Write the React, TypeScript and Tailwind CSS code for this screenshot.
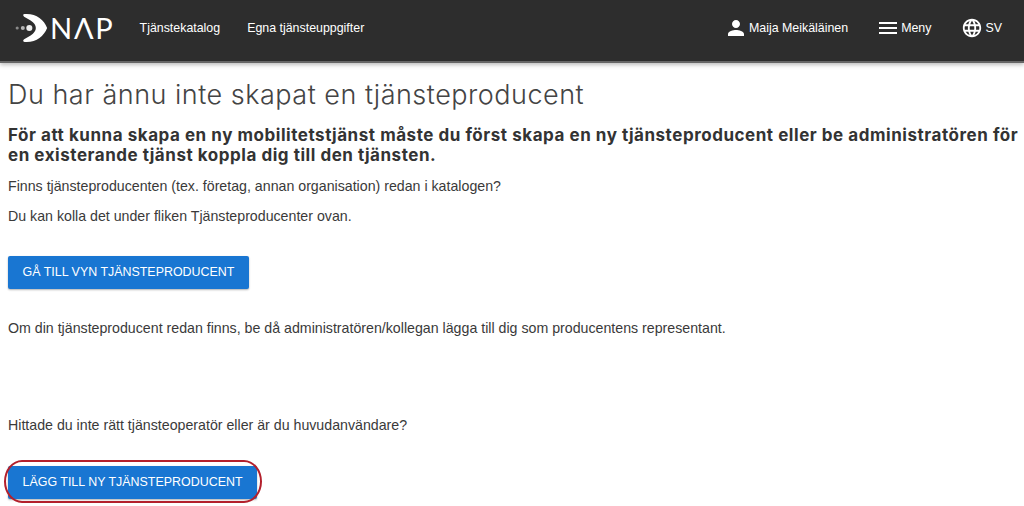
import { MdLanguage, MdMenu, MdPerson } from "react-icons/md";

function Logo() {
  return (
    <div className="flex items-center">
      <svg width="33" height="30" viewBox="0 0 38 34" className="text-white">
        <circle cx="2.500" cy="17" r="1.800" fill="#8a8a8a" />
        <circle cx="9" cy="17" r="2.300" fill="#b5b5b5" />
        <circle cx="16.500" cy="17" r="3.500" fill="#ececec" />
        <path
          d="M11 1 C24 0 33 7 37 17 C33 27 24 34 11 33 C9 33 9 31 10.500 30 L18 25.500 C22 23 24 20 24 17 C24 14 22 11 18 8.500 L10.500 4 C9 3 9 1 11 1 Z"
          fill="currentColor"
        />
      </svg>
      <span className="ml-[2px] font-['Lato',sans-serif] text-[29px] leading-none font-normal tracking-[1.800px] text-white">
        NΛP
      </span>
    </div>
  );
}

function Header() {
  return (
    <header className="flex h-[63px] items-center justify-between border-b-2 border-[#666] bg-[#2d2d2d] pr-[22px] pb-[6px] pl-[15px] text-[12.400px] text-white shadow-[0_2px_4px_rgba(0,0,0,0.25)]">
      <div className="flex items-center">
        <Logo />
        <nav className="ml-[25px] flex gap-[27px]">
          <span>Tjänstekatalog</span>
          <span>Egna tjänsteuppgifter</span>
        </nav>
      </div>
      <div className="flex items-center">
        <MdPerson size={24} />
        <span className="ml-[1px]">Maija Meikäläinen</span>
        <MdMenu size={24} className="ml-[28px]" />
        <span className="ml-[1px]">Meny</span>
        <MdLanguage size={22} className="ml-[30px]" />
        <span className="ml-[2px]">SV</span>
      </div>
    </header>
  );
}

function BlueButton({ label }: { label: string }) {
  return (
    <button className="rounded-[2px] bg-[#1976d2] px-[14.500px] py-[9px] text-[12.450px] leading-[15px] text-white shadow-[0_1px_2px_rgba(0,0,0,0.3)]">
      {label}
    </button>
  );
}

export default function App() {
  return (
    <div className="h-[506px] w-[1024px] overflow-hidden bg-white font-['Liberation_Sans',sans-serif] text-[14.200px] leading-[16px] text-[#3a3a3a]">
      <Header />
      <main className="pr-[2px] pl-[8px]">
        <h1 className="mt-[15px] font-['Inter',sans-serif] text-[27px] leading-[34px] font-light tracking-[0.500px] text-[#444]">
          Du har ännu inte skapat en tjänsteproducent
        </h1>
        <h2 className="mt-[13px] font-['Inter',sans-serif] text-[17px] leading-[20px] font-bold tracking-[0.540px] text-[#333]">
          För att kunna skapa en ny mobilitetstjänst måste du först skapa en ny
          tjänsteproducent eller be administratören för en existerande tjänst
          koppla dig till den tjänsten.
        </h2>
        <p className="mt-[13px]">
          Finns tjänsteproducenten (tex. företag, annan organisation) redan i
          katalogen?
        </p>
        <p className="mt-[14px]">
          Du kan kolla det under fliken Tjänsteproducenter ovan.
        </p>
        <div className="mt-[32px]">
          <BlueButton label="GÅ TILL VYN TJÄNSTEPRODUCENT" />
        </div>
        <p className="mt-[31px]">
          Om din tjänsteproducent redan finns, be då administratören/kollegan
          lägga till dig som producentens representant.
        </p>
        <p className="mt-[81px]">
          Hittade du inte rätt tjänsteoperatör eller är du huvudanvändare?
        </p>
        <div className="mt-[33px]">
          <div className="relative inline-block">
            <BlueButton label="LÄGG TILL NY TJÄNSTEPRODUCENT" />
            <span className="absolute -top-[6px] -right-[5px] -bottom-[4px] -left-[4px] rounded-[18px/50%] border-[2.500px] border-[#b3202c]" />
          </div>
        </div>
      </main>
    </div>
  );
}
